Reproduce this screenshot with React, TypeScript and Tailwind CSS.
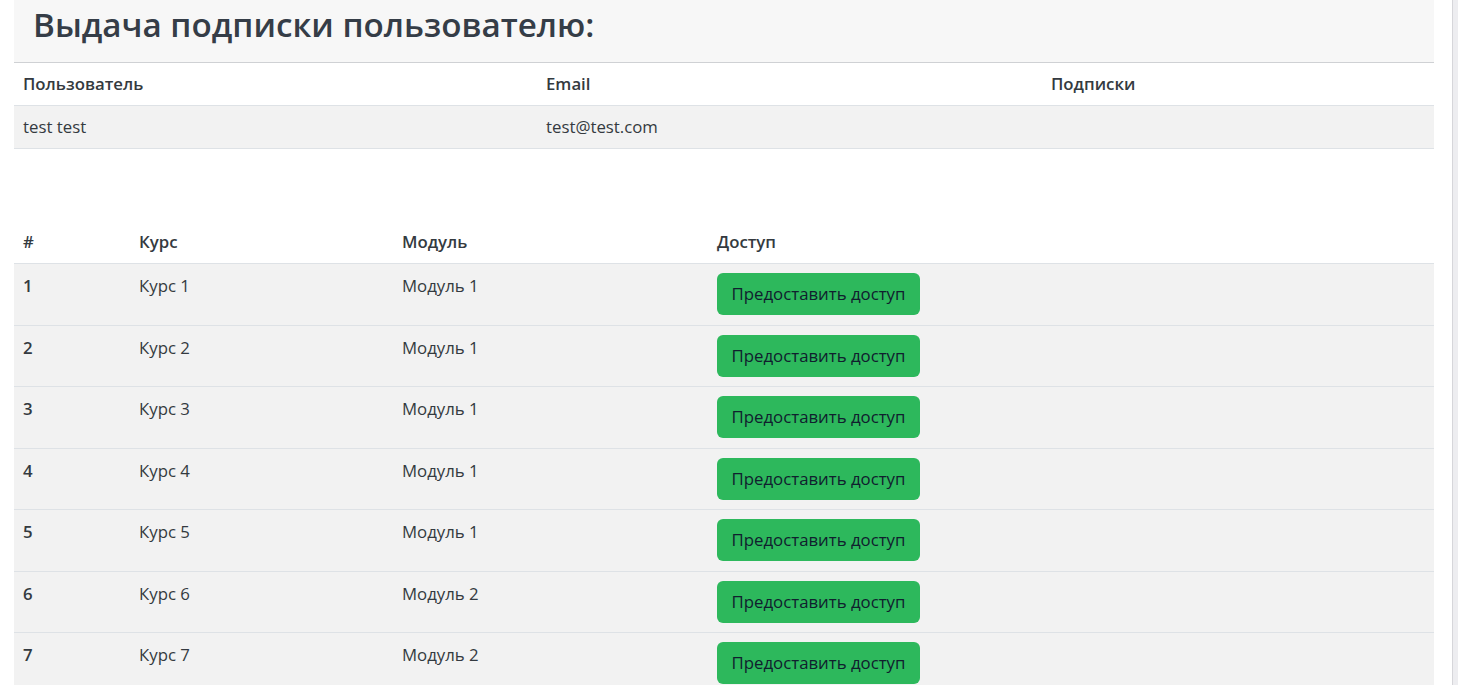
const courses = [
  { id: 1, course: 'Курс 1', module: 'Модуль 1' },
  { id: 2, course: 'Курс 2', module: 'Модуль 1' },
  { id: 3, course: 'Курс 3', module: 'Модуль 1' },
  { id: 4, course: 'Курс 4', module: 'Модуль 1' },
  { id: 5, course: 'Курс 5', module: 'Модуль 1' },
  { id: 6, course: 'Курс 6', module: 'Модуль 2' },
  { id: 7, course: 'Курс 7', module: 'Модуль 2' },
]

export default function App() {
  return (
    <div className="flex h-[685px] overflow-hidden bg-white text-[#343a40]" style={{ fontFamily: '"Open Sans", "Noto Sans", sans-serif' }}>
      <div className="flex-1 pl-[14px] pr-[18px]">
        <div className="bg-[#f7f7f7] border-b border-[#cfd1d4] h-[63px] pl-[19px] pt-[3px]">
          <h1 className="text-[33.2px] font-semibold leading-[44px] text-[#353d47]">Выдача подписки пользователю:</h1>
        </div>

        <table className="w-full border-collapse text-[16.8px] leading-[24px]">
          <thead>
            <tr className="border-b border-[#dee2e6]">
              <th className="w-[523px] text-left font-semibold px-[9px] py-[9px]">Пользователь</th>
              <th className="w-[505px] text-left font-semibold px-[9px] py-[9px]">Email</th>
              <th className="text-left font-semibold px-[9px] py-[9px]">Подписки</th>
            </tr>
          </thead>
          <tbody>
            <tr className="bg-[#f2f2f2] border-b border-[#dee2e6]">
              <td className="px-[9px] py-[9px]">test test</td>
              <td className="px-[9px] py-[9px]">test@test.com</td>
              <td className="px-[9px] py-[9px]"></td>
            </tr>
          </tbody>
        </table>

        <table className="w-full border-collapse text-[16.8px] leading-[24px] mt-[72px]">
          <thead>
            <tr className="border-b border-[#dee2e6]">
              <th className="w-[116px] text-left font-semibold px-[9px] py-[9px]">#</th>
              <th className="w-[263px] text-left font-semibold px-[9px] py-[9px]">Курс</th>
              <th className="w-[315px] text-left font-semibold px-[9px] py-[9px]">Модуль</th>
              <th className="text-left font-semibold px-[9px] py-[9px]">Доступ</th>
            </tr>
          </thead>
          <tbody>
            {courses.map((c) => (
              <tr key={c.id} className="bg-[#f2f2f2] border-b border-[#dee2e6] align-top">
                <td className="px-[9px] pt-[10px] pb-[9px] font-semibold">{c.id}</td>
                <td className="px-[9px] pt-[10px] pb-[9px]">{c.course}</td>
                <td className="px-[9px] pt-[10px] pb-[9px]">{c.module}</td>
                <td className="px-[9px] pt-[9px] pb-[9.5px]">
                  <button type="button" className="h-[42px] w-[203px] rounded-[6px] bg-[#2db85c] text-[#10202e] text-[16.8px] leading-[24px]">
                    Предоставить доступ
                  </button>
                </td>
              </tr>
            ))}
          </tbody>
        </table>
      </div>
      <div className="w-[6px] shrink-0 border-l border-[#d6d6da] bg-[#ededf0]" />
    </div>
  )
}
